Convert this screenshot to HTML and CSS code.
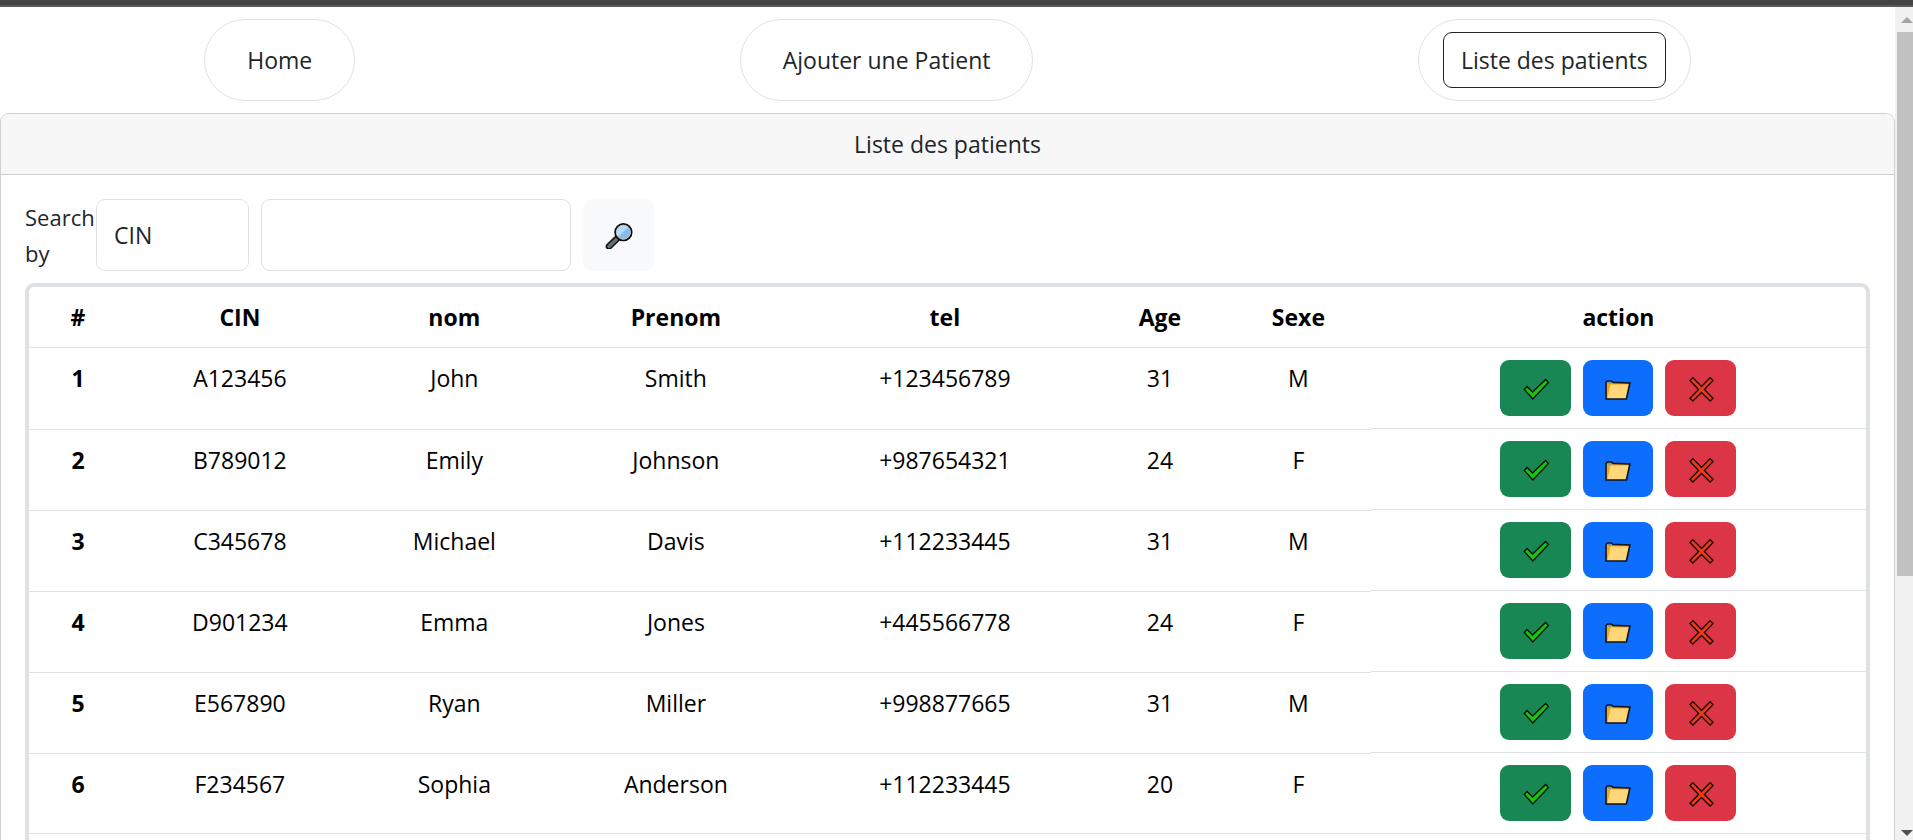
FILE: index.html
```html
<!DOCTYPE html>
<html lang="fr">
<head>
<meta charset="utf-8">
<title>Liste des patients</title>
<link rel="stylesheet" href="styles.css">
</head>
<body>
<svg class="sprite" aria-hidden="true">
  <symbol id="i-check" viewBox="0 0 28 28">
    <path d="M2.3 15.4 5 12.6 10.6 18.1 23.6 5.4 26.4 8.4 10.8 24.9Z" fill="#16c60c" stroke="#0b0f0b" stroke-width="1.4"/>
  </symbol>
  <symbol id="i-folder" viewBox="0 0 28 28">
    <path d="M2 25V8.4L3.6 7H7.4L9 8.4 25.9 9 22.4 25Z" fill="#f3a712"/>
    <path d="M4.4 7.6H7.4V9.8H4Z" fill="#5aa0d0"/>
    <path d="M6.6 10.4H25.4L22.2 25H3.2Z" fill="#ffd679"/>
    <path d="M2 25V8.4L3.6 7H7.4L9 8.4 25.9 9 22.4 25Z" fill="none" stroke="#0b1220" stroke-width="1.6"/>
  </symbol>
  <symbol id="i-cross" viewBox="0 0 28 28">
    <path d="M3 6.5 5.9 3.8 14.5 12.4 23.1 3.8 26 6.5 17.4 15.4 26 24.2 23.1 27 14.5 18.4 5.9 27 3 24.2 11.6 15.4Z" fill="#f03a17" stroke="#1a0a0a" stroke-width="1.4"/>
  </symbol>
  <symbol id="i-search" viewBox="0 0 28 28">
    <path d="M11.5 18.2 4 25.4" stroke="#0c0c0c" stroke-width="6.6" stroke-linecap="round"/>
    <path d="M11.5 18.2 4 25.4" stroke="#636f72" stroke-width="3.6" stroke-linecap="round"/>
    <circle cx="18.4" cy="11.2" r="8.2" fill="#83beec" stroke="#0c0c0c" stroke-width="1.9"/>
    <path d="M13.2 15.9A7 7 0 0 1 23.2 6.2Z" fill="#b4dbf6"/>
    <circle cx="18.4" cy="11.2" r="7" fill="none" stroke="#cbc6c0" stroke-width="1"/>
  </symbol>
</svg>

<div class="topbar"></div>
<div class="viewport">
  <div class="page">
    <nav class="nav">
      <div class="pill"><a class="nav-link" href="#">Home</a></div>
      <div class="pill"><a class="nav-link" href="#">Ajouter une Patient</a></div>
      <div class="pill"><a class="nav-link active" href="#">Liste des patients</a></div>
    </nav>

    <main class="card">
      <header class="card-header">Liste des patients</header>
      <div class="card-body">
        <form class="search">
          <label class="search-label" for="field">Search by</label>
          <select class="field field-select" id="field"><option>CIN</option><option>nom</option></select>
          <input class="field field-input" type="text" aria-label="Search">
          <button class="btn btn-light" type="button" aria-label="Search"><svg class="icon"><use href="#i-search"/></svg></button>
        </form>

        <div class="table-box">
          <table class="table">
            <colgroup>
              <col class="c-num"><col class="c-cin"><col class="c-nom"><col class="c-prenom"><col class="c-tel"><col class="c-age"><col class="c-sexe"><col class="c-action">
            </colgroup>
            <thead>
              <tr><th>#</th><th>CIN</th><th>nom</th><th>Prenom</th><th>tel</th><th>Age</th><th>Sexe</th><th>action</th></tr>
            </thead>
            <tbody>
              <tr><th>1</th><td>A123456</td><td>John</td><td>Smith</td><td>+123456789</td><td>31</td><td>M</td><td class="actions"><div class="btns"><button class="btn btn-green" aria-label="Valider"><svg class="icon"><use href="#i-check"/></svg></button><button class="btn btn-blue" aria-label="Dossier"><svg class="icon"><use href="#i-folder"/></svg></button><button class="btn btn-red" aria-label="Supprimer"><svg class="icon"><use href="#i-cross"/></svg></button></div></td></tr>
              <tr><th>2</th><td>B789012</td><td>Emily</td><td>Johnson</td><td>+987654321</td><td>24</td><td>F</td><td class="actions"><div class="btns"><button class="btn btn-green" aria-label="Valider"><svg class="icon"><use href="#i-check"/></svg></button><button class="btn btn-blue" aria-label="Dossier"><svg class="icon"><use href="#i-folder"/></svg></button><button class="btn btn-red" aria-label="Supprimer"><svg class="icon"><use href="#i-cross"/></svg></button></div></td></tr>
              <tr><th>3</th><td>C345678</td><td>Michael</td><td>Davis</td><td>+112233445</td><td>31</td><td>M</td><td class="actions"><div class="btns"><button class="btn btn-green" aria-label="Valider"><svg class="icon"><use href="#i-check"/></svg></button><button class="btn btn-blue" aria-label="Dossier"><svg class="icon"><use href="#i-folder"/></svg></button><button class="btn btn-red" aria-label="Supprimer"><svg class="icon"><use href="#i-cross"/></svg></button></div></td></tr>
              <tr><th>4</th><td>D901234</td><td>Emma</td><td>Jones</td><td>+445566778</td><td>24</td><td>F</td><td class="actions"><div class="btns"><button class="btn btn-green" aria-label="Valider"><svg class="icon"><use href="#i-check"/></svg></button><button class="btn btn-blue" aria-label="Dossier"><svg class="icon"><use href="#i-folder"/></svg></button><button class="btn btn-red" aria-label="Supprimer"><svg class="icon"><use href="#i-cross"/></svg></button></div></td></tr>
              <tr><th>5</th><td>E567890</td><td>Ryan</td><td>Miller</td><td>+998877665</td><td>31</td><td>M</td><td class="actions"><div class="btns"><button class="btn btn-green" aria-label="Valider"><svg class="icon"><use href="#i-check"/></svg></button><button class="btn btn-blue" aria-label="Dossier"><svg class="icon"><use href="#i-folder"/></svg></button><button class="btn btn-red" aria-label="Supprimer"><svg class="icon"><use href="#i-cross"/></svg></button></div></td></tr>
              <tr><th>6</th><td>F234567</td><td>Sophia</td><td>Anderson</td><td>+112233445</td><td>20</td><td>F</td><td class="actions"><div class="btns"><button class="btn btn-green" aria-label="Valider"><svg class="icon"><use href="#i-check"/></svg></button><button class="btn btn-blue" aria-label="Dossier"><svg class="icon"><use href="#i-folder"/></svg></button><button class="btn btn-red" aria-label="Supprimer"><svg class="icon"><use href="#i-cross"/></svg></button></div></td></tr>
            </tbody>
          </table>
        </div>
      </div>
    </main>
  </div>

  <div class="scrollbar" aria-hidden="true">
    <svg class="arrow" viewBox="0 0 12 6"><path d="M0 6 6 0 12 6Z" fill="#a3a3a3"/></svg>
    <div class="track"><div class="thumb"></div></div>
    <svg class="arrow" viewBox="0 0 12 6"><path d="M0 0H12L6 6Z" fill="#505050"/></svg>
  </div>
</div>
</body>
</html>
```
FILE: styles.css
```css
* { box-sizing: border-box; }

body {
  margin: 0;
  height: 100vh;
  display: flex;
  flex-direction: column;
  overflow: hidden;
  background: #fff;
  color: #212529;
  font-family: "Segoe UI", "Open Sans", "Noto Sans", sans-serif;
  font-size: 23px;
  line-height: 36px;
}

.sprite { position: absolute; width: 0; height: 0; }

.topbar {
  flex: none;
  height: 7px;
  background: #444;
  border-bottom: 2px solid #5a5858;
}

.viewport { flex: 1; min-height: 0; display: flex; }

.page {
  flex: 1;
  min-width: 0;
  display: flex;
  flex-direction: column;
  padding-top: 12px;
  overflow: hidden;
}

.nav {
  display: flex;
  justify-content: space-around;
  padding: 0 12px;
  margin-bottom: 12px;
}

.pill {
  padding: 12px 24px;
  border: 1px solid #dee2e6;
  border-radius: 41px;
}

.nav-link {
  display: block;
  padding: 9px 17px;
  border: 1px solid transparent;
  border-radius: 9px;
  color: inherit;
  text-decoration: none;
}

.nav-link.active { border-color: #212529; }

.card {
  flex: 1;
  display: flex;
  flex-direction: column;
  border: 1px solid #d0d0d0;
  border-bottom: 0;
  border-radius: 9px 9px 0 0;
}

.card-header {
  padding: 12px 24px;
  border-bottom: 1px solid #cdcdcd;
  border-radius: 8px 8px 0 0;
  background: #f7f7f7;
  text-align: center;
}

.card-body {
  flex: 1;
  display: flex;
  flex-direction: column;
  padding: 24px 24px 0;
}

.search { display: flex; gap: 12px; margin-bottom: 12px; }

.search-label { width: 71px; margin-right: -12px; font-size: 22px; }

.field {
  height: 72px;
  padding: 0 17px;
  border: 1px solid #dee2e6;
  border-radius: 9px;
  background: #fff;
  color: inherit;
  font: inherit;
}

.field-select { width: 153px; appearance: none; }
.field-input { width: 310px; }

.btn {
  display: flex;
  align-items: center;
  justify-content: center;
  width: 71px;
  height: 56px;
  padding: 0;
  border: 0;
  border-radius: 9px;
}

.btn-light { height: 72px; background: #f8f9fa; }
.btn-green { background: #198754; }
.btn-blue { width: 70px; background: #0d6efd; }
.btn-red { background: #dc3545; }

.icon { width: 28px; height: 28px; }

.table-box {
  flex: 1;
  border: 4px solid #dee2e6;
  border-bottom: 0;
  border-radius: 9px 9px 0 0;
}

.table {
  width: 100%;
  table-layout: fixed;
  border-collapse: separate;
  border-spacing: 0;
  color: #000;
  text-align: center;
}

.c-num { width: 5.33%; }
.c-cin { width: 12.3%; }
.c-nom { width: 11.05%; }
.c-prenom { width: 13.07%; }
.c-tel { width: 16.22%; }
.c-age { width: 7.19%; }
.c-sexe { width: 7.89%; }
.c-action { width: 26.95%; }

.table th,
.table td { padding: 12px; vertical-align: top; }

.table th { font-weight: 700; }

.table thead th,
.table .actions,
.table tbody tr:last-child > * { border-bottom: 1px solid #dee2e6; }

.table tbody tr + tr > :not(.actions) { border-top: 1px solid #dee2e6; }

.btns { display: flex; justify-content: center; gap: 12px; }

.scrollbar {
  flex: none;
  width: 18px;
  display: flex;
  flex-direction: column;
  align-items: flex-end;
  padding: 10px 0 4px 2px;
  background: #f1f1f1;
}

.arrow { width: 12px; height: 6px; }

.track { flex: 1; width: 100%; padding: 9px 0; }

.thumb { height: 69%; background: #c1c1c1; }
```
